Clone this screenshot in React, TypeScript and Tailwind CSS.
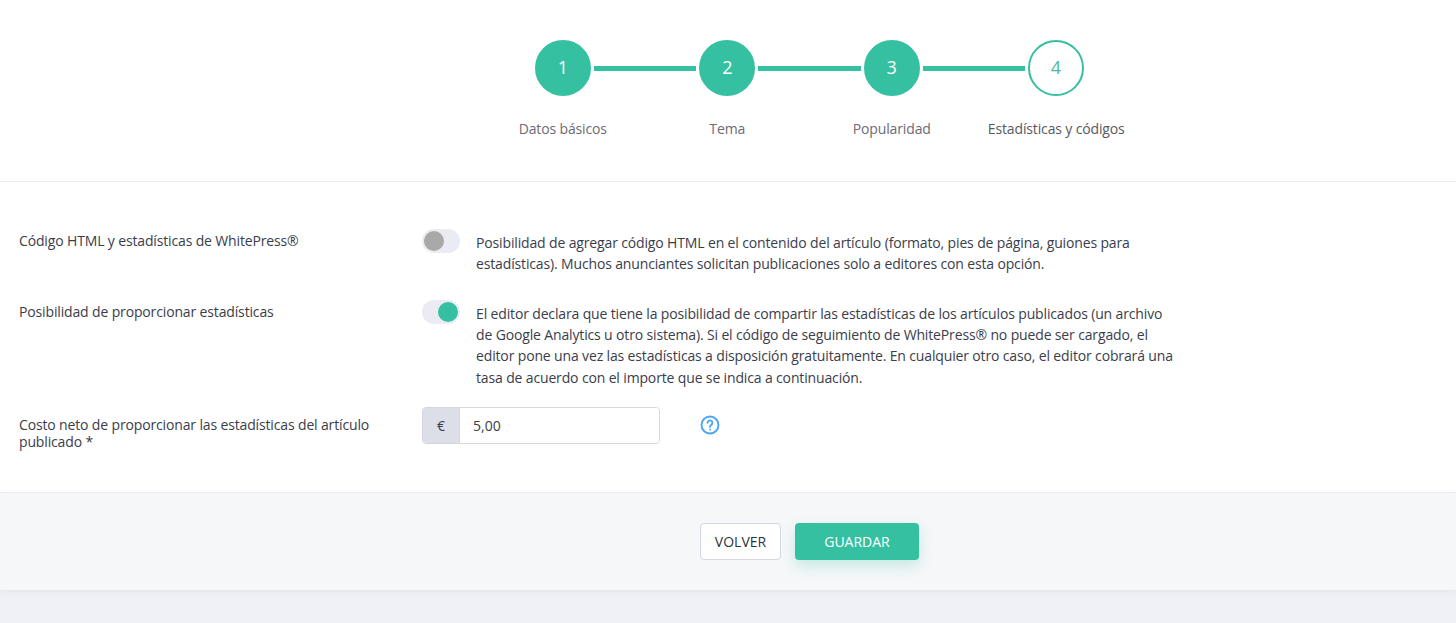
import React from 'react';

const steps = [
  { n: 1, label: 'Datos básicos', done: true },
  { n: 2, label: 'Tema', done: true },
  { n: 3, label: 'Popularidad', done: true },
  { n: 4, label: 'Estadísticas y códigos', done: false },
];

const Toggle: React.FC<{ on?: boolean }> = ({ on }) => (
  <div className={`w-[38px] h-6 rounded-full bg-[#ebecf3] flex items-center px-[2px] shrink-0 ${on ? 'justify-end' : 'justify-start'}`}>
    <div className={`w-5 h-5 rounded-full ${on ? 'bg-[#35c0a2]' : 'bg-[#a9a9a9]'}`} />
  </div>
);

export default function App() {
  return (
    <div className="min-h-[623px] bg-[#f0f1f6] text-[14px] leading-[21.33px] text-[#3a3d4b] font-['Open_Sans',sans-serif] overflow-hidden">
      <div className="bg-white h-[182px] border-b border-[#e9ebee] pt-10 pl-[535px]">
        <div className="w-[549px] flex items-center">
          {steps.map((s, i) => (
            <React.Fragment key={s.n}>
              {i > 0 && <div className="flex-1 h-[5px] mx-[3px] bg-[#35c0a2]" />}
              <div className={`w-14 h-14 rounded-full border-2 border-[#35c0a2] flex items-center justify-center text-[18px] ${s.done ? 'bg-[#35c0a2] text-white' : 'bg-white text-[#4fb9a2]'}`}>
                {s.n}
              </div>
            </React.Fragment>
          ))}
        </div>
        <div className="w-[658px] -ml-[54.5px] mt-[22px] grid grid-cols-4 text-center text-[#6b6b76] tracking-[-0.14px]">
          {steps.map((s) => (
            <div key={s.n} className={`whitespace-nowrap ${s.done ? '' : 'text-[#575863]'}`}>{s.label}</div>
          ))}
        </div>
      </div>

      <div className="bg-white h-[310px] pl-[19px] pt-[47px]">
        <div className="flex tracking-[-0.145px]">
          <div className="w-[403px] pt-[1px]">Código HTML y estadísticas de WhitePress®</div>
          <Toggle />
          <p className="w-[700px] ml-4 pt-[3px]">
            Posibilidad de agregar código HTML en el contenido del artículo (formato, pies de página, guiones para estadísticas). Muchos anunciantes solicitan publicaciones solo a editores con esta opción.
          </p>
        </div>
        <div className="flex mt-[25px] tracking-[-0.145px]">
          <div className="w-[403px] pt-[1px]">Posibilidad de proporcionar estadísticas</div>
          <Toggle on />
          <p className="w-[700px] ml-4 pt-[3px]">
            El editor declara que tiene la posibilidad de compartir las estadísticas de los artículos publicados (un archivo de Google Analytics u otro sistema). Si el código de seguimiento de WhitePress® no puede ser cargado, el editor pone una vez las estadísticas a disposición gratuitamente. En cualquier otro caso, el editor cobrará una tasa de acuerdo con el importe que se indica a continuación.
          </p>
        </div>
        <div className="flex mt-[19px]">
          <div className="w-[403px] pr-[30px] pt-[9px] leading-[17px] tracking-[-0.145px]">Costo neto de proporcionar las estadísticas del artículo publicado *</div>
          <div className="w-[238px] h-[37px] flex border border-[#d3d6e4] rounded-[4px] overflow-hidden">
            <div className="w-[37px] bg-[#dcdfe8] flex items-center justify-center border-r border-[#d3d6e4]">€</div>
            <div className="flex-1 bg-white pl-[13px] flex items-center">5,00</div>
          </div>
          <div className="ml-[40px] pt-2">
            <svg width="20" height="20" viewBox="0 0 20 20" fill="none" stroke="#4ba6f5" strokeWidth="1.9" strokeLinecap="round">
              <circle cx="10" cy="10" r="8.5" />
              <path d="M7.6 7.8a2.4 2.4 0 1 1 3.6 2.1c-.8.5-1.2 1-1.2 1.8" />
              <path d="M10 14.4v.1" />
            </svg>
          </div>
        </div>
      </div>

      <div className="h-[98px] bg-[#f6f7f9] border-t border-[#e9ebee] pt-[30px] pl-[700px] flex items-start gap-[14px] shadow-[0_2px_8px_rgba(0,0,0,0.05)]">
        <button className="w-[81px] h-[37px] bg-white border border-[#d3d6e4] rounded-[4px] text-[#2f3242]">VOLVER</button>
        <button className="w-[124px] h-[37px] bg-[#35c0a2] rounded-[4px] text-white shadow-[0_6px_14px_rgba(53,192,162,0.25)]">GUARDAR</button>
      </div>
    </div>
  );
}
